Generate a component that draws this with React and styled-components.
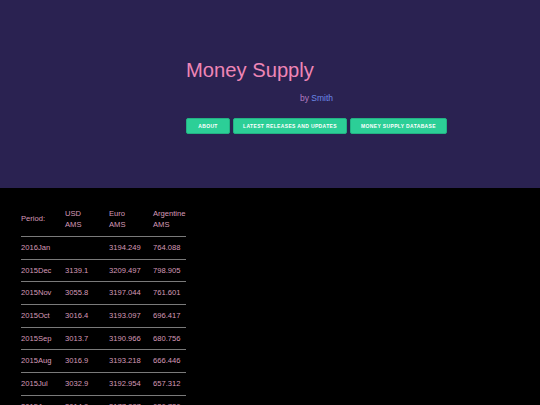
import styled, { createGlobalStyle } from "styled-components";

const GlobalStyle = createGlobalStyle`
  html, body {
    margin: 0;
    padding: 0;
    background: #000;
    font-family: "Liberation Sans", Arial, sans-serif;
  }
`;

const StyledPage = styled.div`
  width: 540px;
  height: 405px;
  overflow: hidden;
  background: #000;
`;

const StyledHeader = styled.header`
  height: 188px;
  background-color: #2a2251;
  display: flex;
  flex-direction: column;
  padding: 58px 0 0 186px;
  box-sizing: border-box;
`;

const StyledTitle = styled.h1`
  margin: 0;
  font-size: 20.2px;
  font-weight: normal;
  line-height: 24px;
  color: #ef86b6;
`;

const StyledByline = styled.p`
  margin: 11px 0 0 114px;
  font-size: 8.5px;
  line-height: 10px;
  color: #b27cc0;
`;

const StyledAuthor = styled.span`
  color: #6b88e6;
`;

const StyledNav = styled.nav`
  display: flex;
  gap: 3px;
  margin-top: 15px;
`;

const StyledButton = styled.button`
  width: ${({ $w }) => $w}px;
  height: 16px;
  padding: 0;
  border: 1px solid #23b283;
  border-radius: 2px;
  background-color: #2ccf97;
  color: #fff;
  font-family: "Liberation Sans", Arial, sans-serif;
  font-size: 5px;
  font-weight: bold;
  letter-spacing: 0.35px;
  text-transform: uppercase;
  cursor: pointer;
`;

const StyledTable = styled.table`
  margin: 14.5px 0 0 21px;
  border-collapse: collapse;
  font-size: 7.6px;
  line-height: 11.67px;
  color: #d69ab8;
`;

const StyledTh = styled.th`
  width: ${({ $w }) => ($w ? `${$w}px` : "auto")};
  padding: 5px 0;
  text-align: left;
  font-weight: normal;
  vertical-align: middle;
  border-bottom: 1px solid #7a7a7a;
`;

const StyledTd = styled.td`
  padding: 5px 0;
  border-bottom: 1px solid #7a7a7a;
  white-space: nowrap;
`;

const rows = [
  ["2016Jan", "", "3194.249", "764.088"],
  ["2015Dec", "3139.1", "3209.497", "798.905"],
  ["2015Nov", "3055.8", "3197.044", "761.601"],
  ["2015Oct", "3016.4", "3193.097", "696.417"],
  ["2015Sep", "3013.7", "3190.966", "680.756"],
  ["2015Aug", "3016.9", "3193.218", "666.446"],
  ["2015Jul", "3032.9", "3192.954", "657.312"],
  ["2015Jun", "3014.9", "3177.887", "626.726"],
];

export default function App() {
  return (
    <StyledPage>
      <GlobalStyle />
      <StyledHeader>
        <StyledTitle>Money Supply</StyledTitle>
        <StyledByline>
          by <StyledAuthor>Smith</StyledAuthor>
        </StyledByline>
        <StyledNav>
          <StyledButton $w={44}>About</StyledButton>
          <StyledButton $w={114}>Latest releases and updates</StyledButton>
          <StyledButton $w={97}>Money supply database</StyledButton>
        </StyledNav>
      </StyledHeader>

      <StyledTable>
        <thead>
          <tr>
            <StyledTh $w={44}>Period:</StyledTh>
            <StyledTh $w={44}>
              USD
              <br />
              AMS
            </StyledTh>
            <StyledTh $w={44}>
              Euro
              <br />
              AMS
            </StyledTh>
            <StyledTh>
              Argentine
              <br />
              AMS
            </StyledTh>
          </tr>
        </thead>
        <tbody>
          {rows.map((row) => (
            <tr key={row[0]}>
              {row.map((cell, i) => (
                <StyledTd key={i}>{cell}</StyledTd>
              ))}
            </tr>
          ))}
        </tbody>
      </StyledTable>
    </StyledPage>
  );
}
